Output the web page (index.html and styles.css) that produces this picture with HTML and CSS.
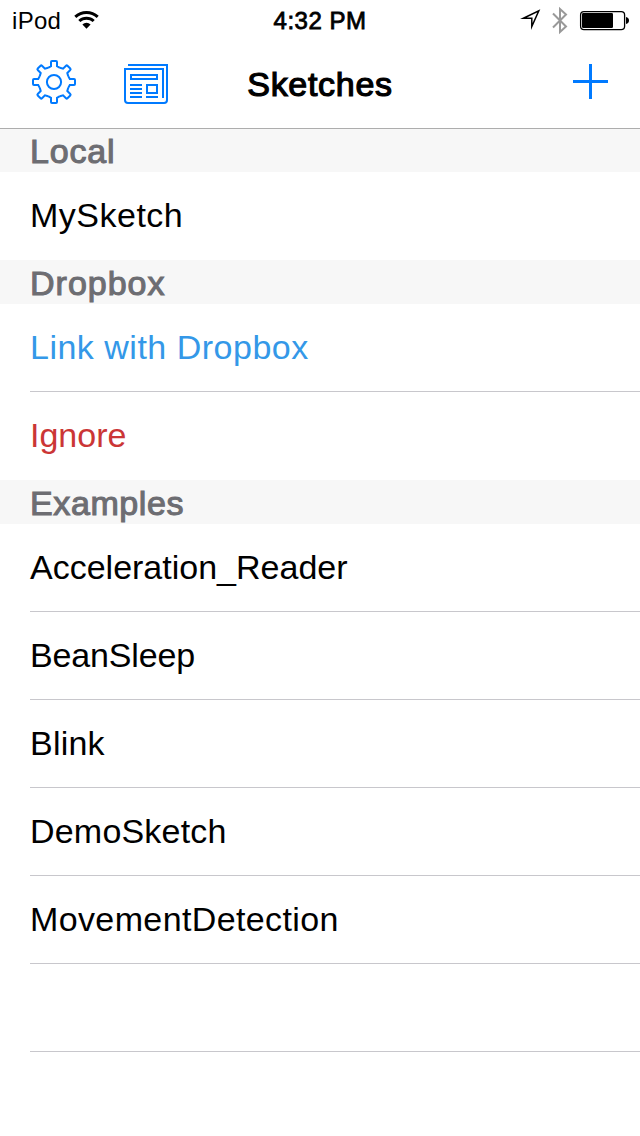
FILE: index.html
```html
<!DOCTYPE html>
<html lang="en">
<head>
<meta charset="utf-8">
<title>Sketches</title>
<link rel="stylesheet" href="styles.css">
</head>
<body>
<div class="screen">
  <header class="top">
    <div class="status">
      <div class="status-left">
        <span class="device">iPod</span>
        <svg class="wifi" width="26" height="20" viewBox="0 0 26 20">
          <g fill="none" stroke="#000" stroke-width="3">
            <path d="M1.3 6.8A16.6 16.6 0 0 1 23.7 6.8"/>
            <path d="M5.3 11A10.6 10.6 0 0 1 19.7 11"/>
          </g>
          <path d="M8.4 14.4a6 6 0 0 1 8.2 0L12.5 18.8z"/>
        </svg>
      </div>
      <span class="time">4:32 PM</span>
      <svg class="indicators" width="112" height="30" viewBox="0 0 112 30">
        <path d="M3.4 13.2L18.8 5.9 11.8 21.6V13.2z" fill="none" stroke="#000" stroke-width="1.5" stroke-miterlimit="12"/>
        <path d="M33 8.5L46 21.5 40 27V4L46 9.5 33 22.5" fill="none" stroke="#999" stroke-width="2"/>
        <rect x="60.6" y="6.6" width="44" height="18" rx="3.4" fill="none" stroke="#000" stroke-width="1.3"/>
        <rect x="62" y="8" width="31" height="15" rx="1.2"/>
        <path d="M106 12q3 .6 3 3.5t-3 3.5z"/>
      </svg>
    </div>
    <nav class="nav">
      <div class="nav-left">
        <svg width="46" height="46" viewBox="-23 -23 46 46" class="line-icon">
          <defs><path id="tooth" d="M-5.89-14.23L-3-15.8V-20q0-1 1-1H2q1 0 1 1v4.2L5.89-14.23"/></defs>
          <circle r="7.1"/>
          <use href="#tooth"/>
          <use href="#tooth" transform="rotate(45)"/>
          <use href="#tooth" transform="rotate(90)"/>
          <use href="#tooth" transform="rotate(135)"/>
          <use href="#tooth" transform="rotate(180)"/>
          <use href="#tooth" transform="rotate(225)"/>
          <use href="#tooth" transform="rotate(270)"/>
          <use href="#tooth" transform="rotate(315)"/>
        </svg>
        <svg width="44" height="40" viewBox="0 0 44 40" class="line-icon">
          <path d="M4 1H43V36q0 3-3 3H4q-3 0-3-3V5H39V34"/>
          <path d="M7 11H33v4H7zM23 21h10v8H23zM6 21H18M6 25H18M6 29H18M6 33H18M22 33H34"/>
        </svg>
      </div>
      <h1 class="title">Sketches</h1>
      <svg class="add" width="35" height="35" viewBox="0 0 35 35"><path d="M17.5 0V35M0 17.5H35" stroke="#007aff" stroke-width="3"/></svg>
    </nav>
  </header>
  <main>
    <h2 class="section local">Local</h2>
    <ul class="list"><li class="row">MySketch</li></ul>
    <h2 class="section">Dropbox</h2>
    <ul class="list">
      <li class="row link">Link with Dropbox</li>
      <li class="row ignore">Ignore</li>
    </ul>
    <h2 class="section examples">Examples</h2>
    <ul class="list open">
      <li class="row snug">Acceleration_Reader</li>
      <li class="row tight">BeanSleep</li>
      <li class="row mid">Blink</li>
      <li class="row mid">DemoSketch</li>
      <li class="row wide">MovementDetection</li>
      <li class="row"></li>
    </ul>
  </main>
</div>
</body>
</html>
```
FILE: styles.css
```css
* { box-sizing: border-box; }
body { margin: 0; background: #fff; color: #000; font-family: "Liberation Sans", Arial, sans-serif; }
.screen { width: 640px; height: 1136px; overflow: hidden; }
svg { display: block; flex: none; }
.top { height: 129px; border-bottom: 1px solid #adadad; }
.status, .nav { display: grid; grid-template-columns: 1fr auto 1fr; }
.status { height: 40px; font-size: 24px; line-height: 41px; }
.status-left { display: flex; padding-left: 12px; gap: 13px; }
.device { letter-spacing: 0.3px; }
.wifi { margin-top: 10px; }
.time { letter-spacing: 0.5px; -webkit-text-stroke: 0.8px currentColor; }
.indicators { justify-self: end; margin: 5px 8px 0 0; }
.nav { height: 88px; }
.nav-left { display: flex; align-items: flex-start; gap: 47px; padding: 19px 0 0 31px; }
.nav-left svg + svg { margin-top: 5px; }
.line-icon { fill: none; stroke: #007aff; stroke-width: 2; }
.title { margin: 0; font-size: 34px; font-weight: normal; line-height: 88px; letter-spacing: 0.7px; -webkit-text-stroke: 1.2px currentColor; }
.add { justify-self: end; margin: 24px 32px 0 0; }
.section { margin: 0; height: 44px; padding-left: 30px; background: #f7f7f7; color: #6d6d72; font-size: 34px; font-weight: normal; line-height: 46px; letter-spacing: 1px; -webkit-text-stroke: 1.1px currentColor; }
.local { height: 43px; line-height: 45px; letter-spacing: 0.8px; }
.examples { letter-spacing: 0.6px; }
.list { margin: 0; padding: 0 0 0 30px; list-style: none; }
.row { height: 88px; font-size: 34px; line-height: 87px; letter-spacing: 0.5px; border-bottom: 1px solid #c8c7cc; }
.list:not(.open) .row:last-child { border-bottom-color: transparent; }
.link { color: #3498e8; }
.ignore { color: #cb3636; letter-spacing: 0; }
.snug { letter-spacing: 0; }
.tight { letter-spacing: -0.15px; }
.mid { letter-spacing: 0.2px; }
.wide { letter-spacing: 0.38px; }
```
